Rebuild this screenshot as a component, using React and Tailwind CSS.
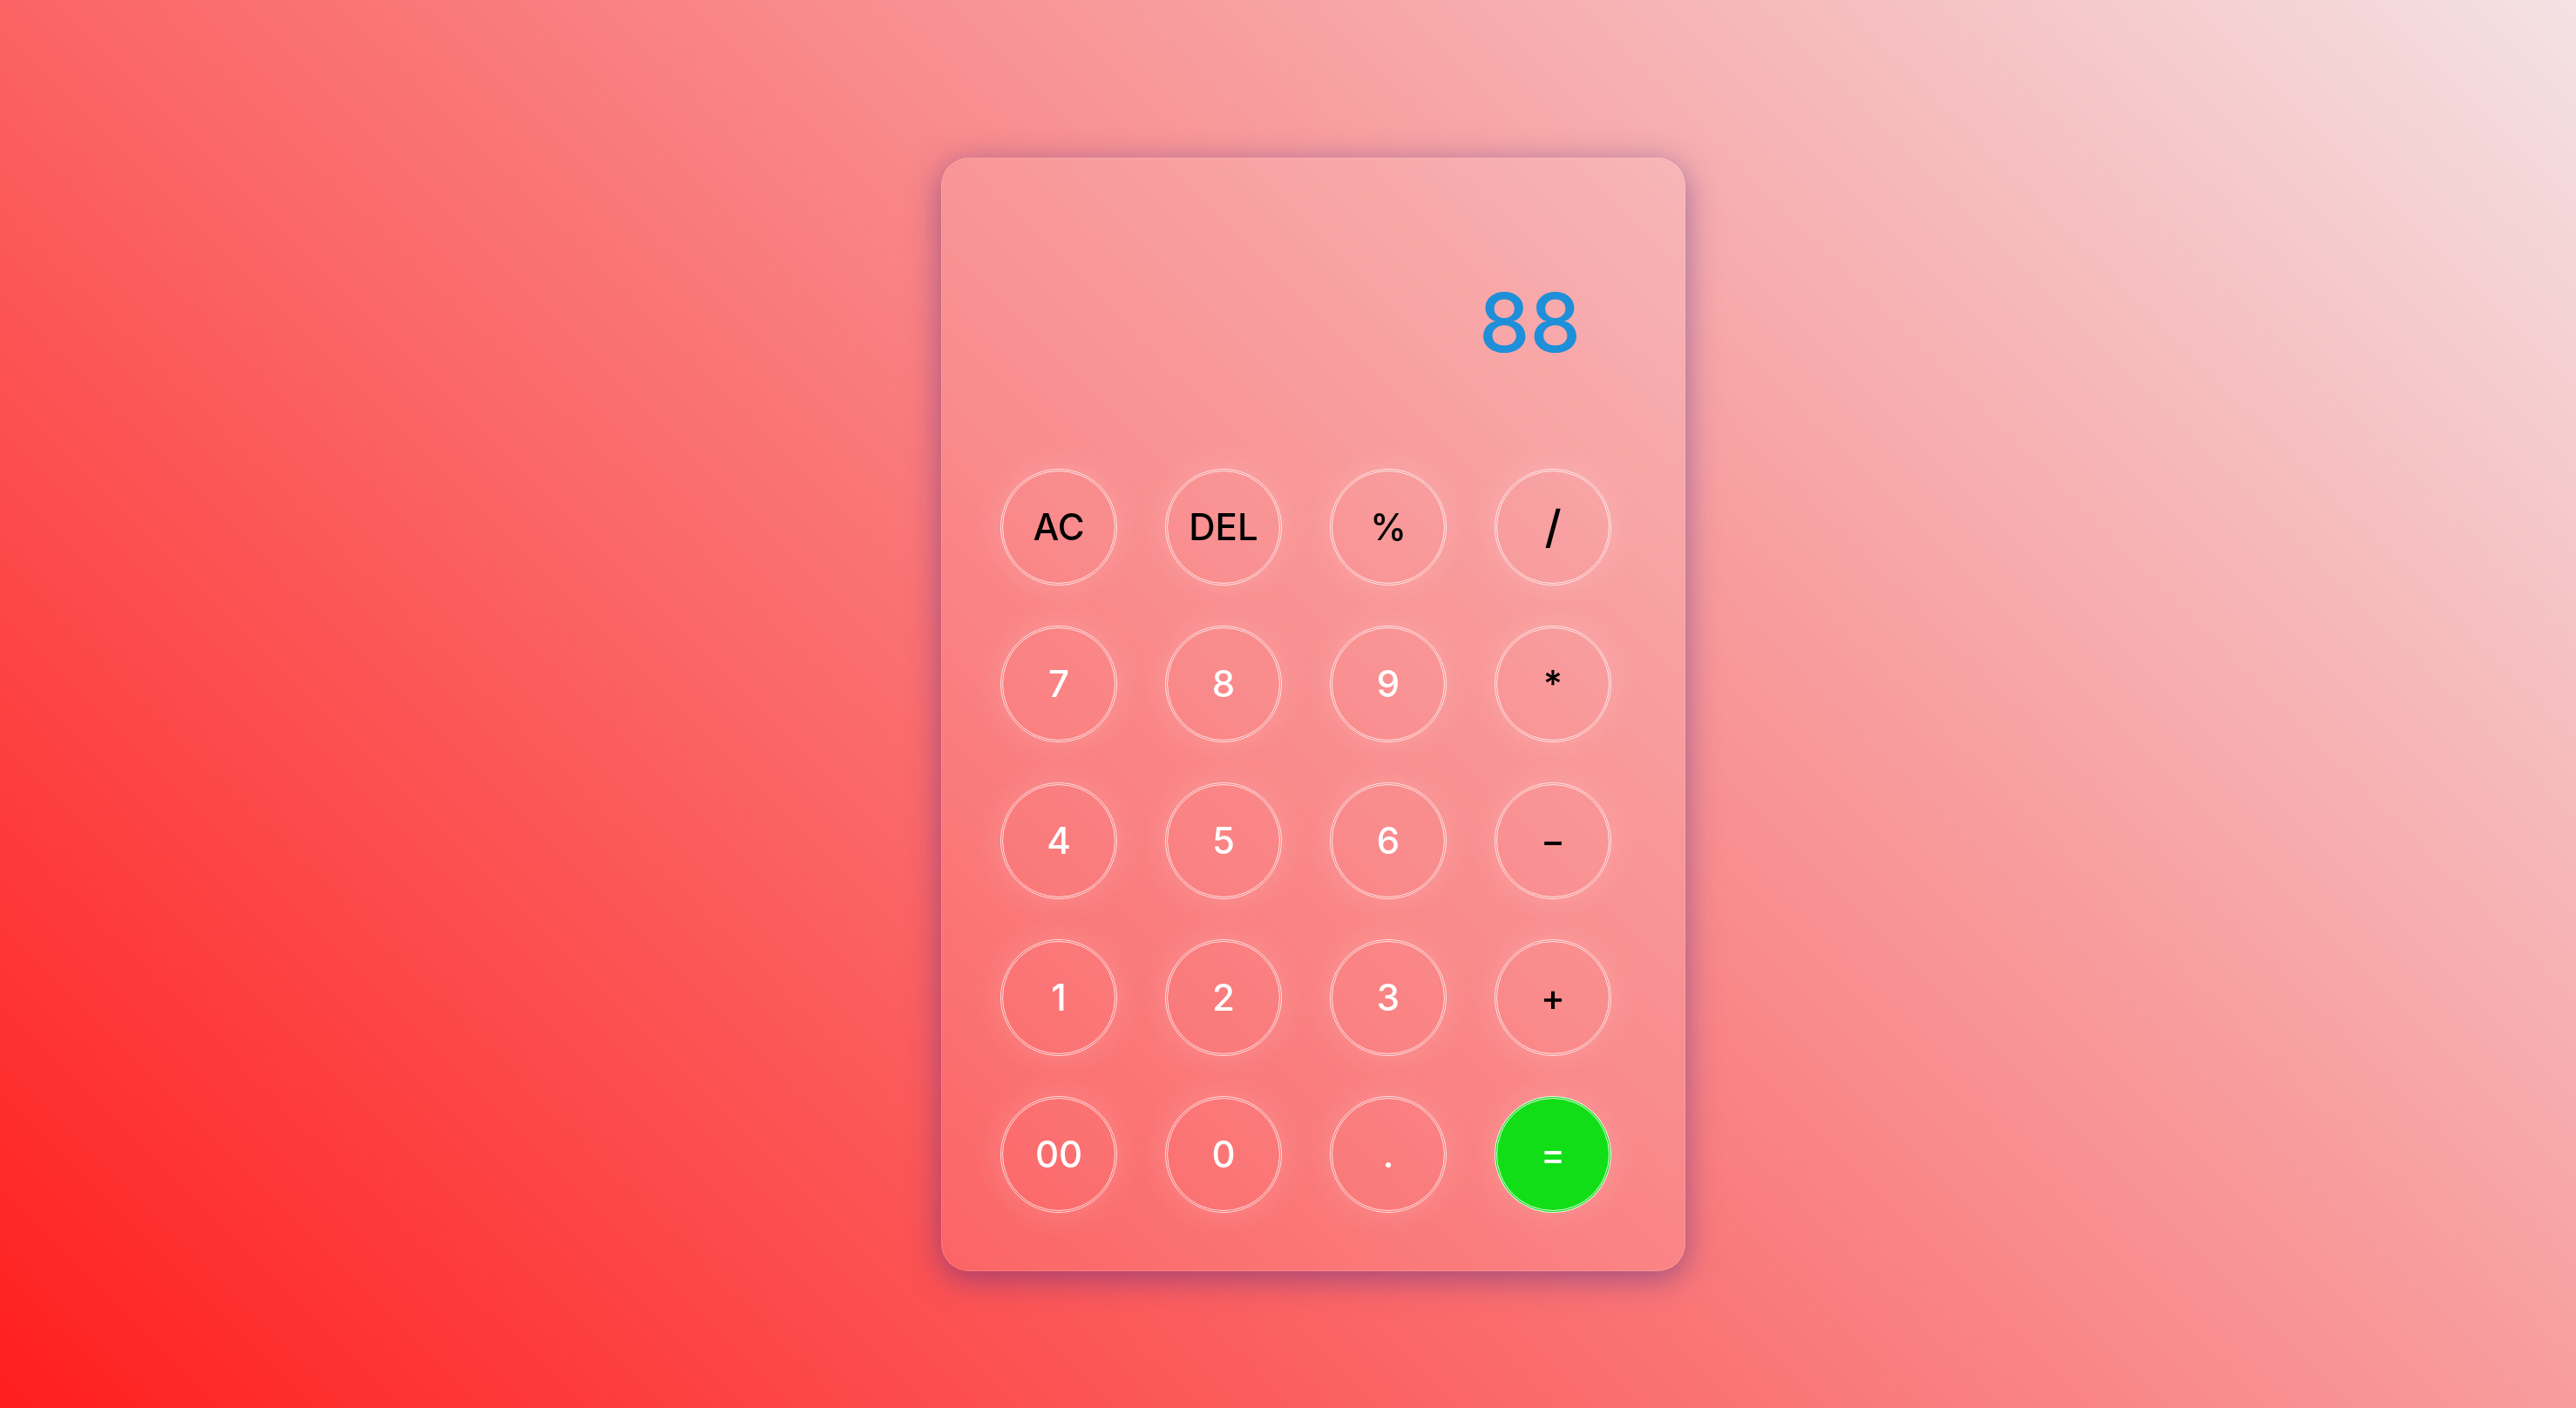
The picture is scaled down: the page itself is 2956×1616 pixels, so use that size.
import React from "react";

const keys = [
  { k: "AC", dark: true },
  { k: "DEL", dark: true },
  { k: "%", dark: true },
  { k: "/", dark: true, big: true },
  { k: "7" },
  { k: "8" },
  { k: "9" },
  { k: "*", dark: true },
  { k: "4" },
  { k: "5" },
  { k: "6" },
  { k: "−", dark: true },
  { k: "1" },
  { k: "2" },
  { k: "3" },
  { k: "+", dark: true },
  { k: "00" },
  { k: "0" },
  { k: "." },
  { k: "=", eq: true },
];

function Key({ k, dark, eq, big }) {
  const base =
    "w-[134px] h-[134px] rounded-full border-[3px] border-double flex items-center justify-center leading-none font-medium shadow-[0_0_36px_rgba(255,255,255,0.16)]";
  const size = big ? "text-[52px]" : "text-[42px]";
  const tone = eq
    ? "bg-[#12de17] border-white/90 text-white"
    : dark
    ? "bg-transparent border-white/75 text-black"
    : "bg-transparent border-white/75 text-white";
  return <button className={`${base} ${size} ${tone}`}>{k}</button>;
}

export default function App() {
  return (
    <div
      className="w-full h-[1616px] flex items-center justify-center pl-[58px] pt-[24px] bg-[linear-gradient(45deg,#ff1e1e,#f4e2e4)]"
      style={{ fontFamily: "Inter, 'Noto Sans', sans-serif" }}
    >
      <div className="w-[854px] h-[1278px] rounded-[32px] bg-white/10 border border-white/15 backdrop-blur-[4px] shadow-[0_8px_36px_0_rgba(70,40,140,0.5)] flex flex-col">
        <div className="h-[356px] flex items-center justify-end pr-[119px] pt-[20px]">
          <span className="text-[93px] leading-none text-[#1e8fd8] font-medium">88</span>
        </div>
        <div className="pl-[67px] grid grid-cols-[repeat(4,134px)] gap-x-[55px] gap-y-[46px]">
          {keys.map((x) => (
            <Key key={x.k} {...x} />
          ))}
        </div>
      </div>
    </div>
  );
}
